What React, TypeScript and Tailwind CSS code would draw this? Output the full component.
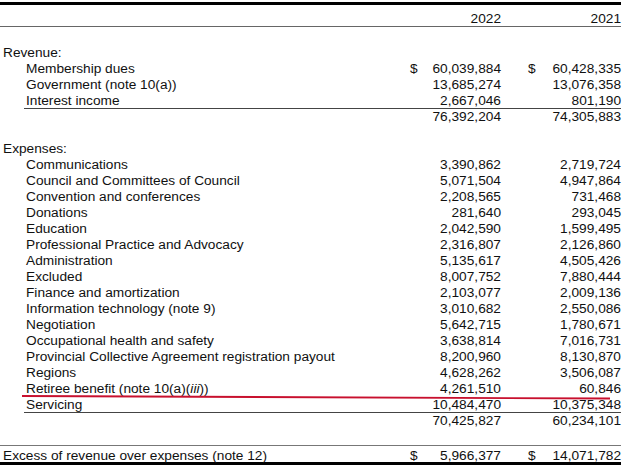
type Row = { label: React.ReactNode; a: string; b: string; dollar?: boolean };

const revenue: Row[] = [
  { label: 'Membership dues', a: '60,039,884', b: '60,428,335', dollar: true },
  { label: 'Government (note 10(a))', a: '13,685,274', b: '13,076,358' },
  { label: 'Interest income', a: '2,667,046', b: '801,190' },
];

const expenses: Row[] = [
  { label: 'Communications', a: '3,390,862', b: '2,719,724' },
  { label: 'Council and Committees of Council', a: '5,071,504', b: '4,947,864' },
  { label: 'Convention and conferences', a: '2,208,565', b: '731,468' },
  { label: 'Donations', a: '281,640', b: '293,045' },
  { label: 'Education', a: '2,042,590', b: '1,599,495' },
  { label: 'Professional Practice and Advocacy', a: '2,316,807', b: '2,126,860' },
  { label: 'Administration', a: '5,135,617', b: '4,505,426' },
  { label: 'Excluded', a: '8,007,752', b: '7,880,444' },
  { label: 'Finance and amortization', a: '2,103,077', b: '2,009,136' },
  { label: 'Information technology (note 9)', a: '3,010,682', b: '2,550,086' },
  { label: 'Negotiation', a: '5,642,715', b: '1,780,671' },
  { label: 'Occupational health and safety', a: '3,638,814', b: '7,016,731' },
  { label: 'Provincial Collective Agreement registration payout', a: '8,200,960', b: '8,130,870' },
  { label: 'Regions', a: '4,628,262', b: '3,506,087' },
  {
    label: (
      <>
        Retiree benefit (note 10(a)(<i>iii</i>))
      </>
    ),
    a: '4,261,510',
    b: '60,846',
  },
  { label: 'Servicing', a: '10,484,470', b: '10,375,348' },
];

function Amounts({ a, b, dollar }: { a: string; b: string; dollar?: boolean }) {
  return (
    <>
      <div className="w-[91px] flex justify-between shrink-0">
        <span>{dollar ? '$' : ''}</span>
        <span>{a}</span>
      </div>
      <div className="w-[93px] ml-[27px] flex justify-between shrink-0">
        <span>{dollar ? '$' : ''}</span>
        <span>{b}</span>
      </div>
    </>
  );
}

function Item({ row, last }: { row: Row; last?: boolean }) {
  return (
    <div className={`ml-[24px] flex h-4 leading-4 ${last ? 'border-b border-[#444]' : ''}`}>
      <div className="flex-1 pl-[2px] whitespace-nowrap">{row.label}</div>
      <Amounts a={row.a} b={row.b} dollar={row.dollar} />
    </div>
  );
}

function Total({ a, b }: { a: string; b: string }) {
  return (
    <div className="ml-[24px] flex h-4 leading-4">
      <div className="flex-1" />
      <Amounts a={a} b={b} />
    </div>
  );
}

export default function App() {
  return (
    <div
      className="relative w-[624px] h-[468px] overflow-hidden bg-white text-[13.7px] text-[#111] pr-[3px] pt-[2px]"
      style={{ fontFamily: '"Liberation Sans", Arial, sans-serif' }}
    >
      <div className="border-t-[3px] border-black" />
      <div className="mt-[6px] flex h-4 leading-4 border-b border-[#666]">
        <div className="flex-1" />
        <div className="w-[91px] text-right">2022</div>
        <div className="w-[93px] ml-[27px] text-right">2021</div>
      </div>

      <div className="h-[18px]" />
      <div className="h-4 leading-4 pl-[3px]">Revenue:</div>
      {revenue.map((r, i) => (
        <Item key={i} row={r} last={i === revenue.length - 1} />
      ))}
      <Total a="76,392,204" b="74,305,883" />

      <div className="h-4" />
      <div className="h-4 leading-4 pl-[3px]">Expenses:</div>
      {expenses.map((r, i) => (
        <Item key={i} row={r} last={i === expenses.length - 1} />
      ))}
      <Total a="70,425,827" b="60,234,101" />

      <div className="h-4" />
      <div className="flex h-[20px] leading-[19px] border-t border-[#777] border-b-[3px] border-b-black">
        <div className="flex-1 pl-[3px]">Excess of revenue over expenses (note 12)</div>
        <Amounts a="5,966,377" b="14,071,782" dollar />
      </div>

      {/* red annotation stroke */}
      <svg className="absolute left-0 top-0 pointer-events-none" width="624" height="468">
        <line x1="22" y1="396" x2="610" y2="398.5" stroke="#c8102e" strokeWidth="1.8" />
      </svg>
    </div>
  );
}
